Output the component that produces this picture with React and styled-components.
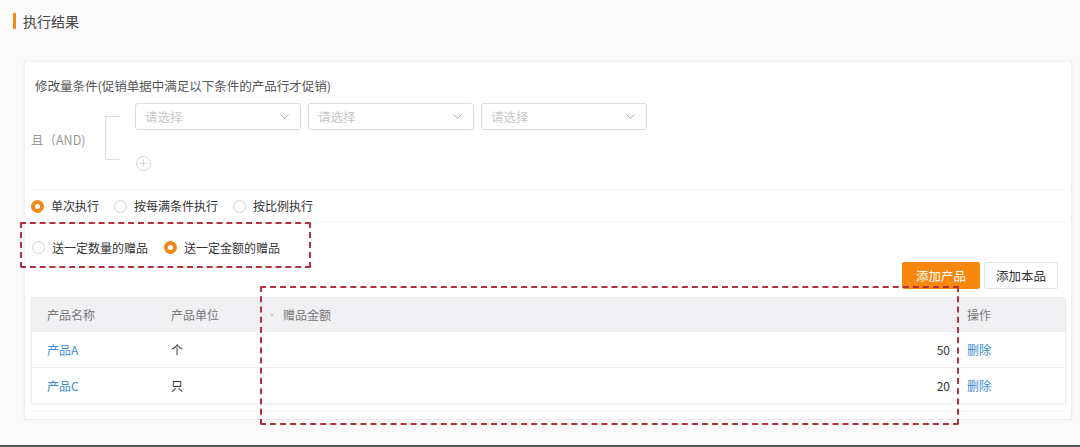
import React from "react";
import styled, { createGlobalStyle } from "styled-components";
import { ChevronDown, CirclePlus } from "lucide-react";

const Global = createGlobalStyle`
  html, body { margin: 0; padding: 0; }
  body {
    background: #fbfbfb;
    font-family: "Noto Sans CJK SC", "Noto Sans", sans-serif;
    color: #333;
  }
  * { box-sizing: border-box; }
`;

const Page = styled.div`
  position: relative;
  width: 1080px;
  height: 447px;
  padding-top: 13px;
  border-bottom: 2px solid #555;
  overflow: hidden;
`;

const Title = styled.div`
  margin-left: 13px;
  padding-left: 7px;
  border-left: 3px solid #f28a1c;
  height: 16px;
  line-height: 16px;
  font-size: 14px;
  color: #444;
`;

const Panel = styled.div`
  margin: 32px 0 0 24px;
  width: 1048px;
  background: #fff;
  border: 1px solid #efefef;
  box-shadow: 0 0 3px rgba(0, 0, 0, 0.04);
  padding: 15px 5px 7px 6px;
`;

const CondTitle = styled.div`
  padding-left: 4px;
  line-height: 18px;
  font-size: 12.5px;
  color: #555;
`;

const CondRow = styled.div`
  display: flex;
  align-items: flex-start;
  margin-top: 8px;
  padding-bottom: 18px;
`;

const AndLabel = styled.div`
  width: 74px;
  align-self: center;
  margin-top: 6px;
  font-size: 12.5px;
  color: #999;
  line-height: 16px;
`;

const Bracket = styled.div`
  width: 15px;
  height: 44px;
  margin-top: 13px;
  margin-right: 15px;
  border: 1px solid #ddd;
  border-right: none;
`;

const CondBody = styled.div`
  display: flex;
  flex-direction: column;
  gap: 25px;
`;

const SelectRow = styled.div`
  display: flex;
  gap: 7px;
`;

const Select = styled.div`
  width: 166px;
  height: 27px;
  border: 1px solid #dcdcdc;
  border-radius: 3px;
  background: #fff;
  display: flex;
  align-items: center;
  justify-content: space-between;
  padding: 0 8px 0 9px;
  font-size: 12.5px;
  color: #c8c8c8;
  svg { color: #999; }
`;

const AddBtn = styled.div`
  width: 17px;
  height: 16px;
  display: flex;
  align-items: center;
  color: #c4c4c4;
`;

const RadioRow = styled.div`
  position: relative;
  display: flex;
  align-items: center;
  border-top: 1px solid #efefef;
  height: ${(p) => p.$h}px;
  padding-top: ${(p) => p.$pt || 0}px;
  padding-left: ${(p) => p.$pl || 0}px;
`;

const RadioItem = styled.label`
  display: flex;
  align-items: center;
  gap: 7px;
  margin-right: ${(p) => p.$mr}px;
  font-size: 12px;
  line-height: 16px;
  color: #333;
`;

const Dot = styled.span`
  width: 13px;
  height: 13px;
  border-radius: 50%;
  background: #fff;
  border: ${(p) => (p.$on ? "4px solid #f0891a" : "1px solid #d4d4d4")};
`;

const Toolbar = styled.div`
  display: flex;
  justify-content: flex-end;
  gap: 4px;
  padding-right: 8px;
`;

const Button = styled.div`
  height: 27px;
  padding: 0 ${(p) => p.$px}px;
  display: flex;
  align-items: center;
  font-size: 12.5px;
  border-radius: 2px;
  background: ${(p) => (p.$primary ? "#f8870f" : "#fff")};
  color: ${(p) => (p.$primary ? "#fff" : "#333")};
  border: 1px solid ${(p) => (p.$primary ? "#f8870f" : "#e2e2e2")};
`;

const TableWrap = styled.div`
  margin-top: 8px;
  padding-bottom: 7px;
  border-bottom: 1px solid #f2f2f2;
`;

const Table = styled.div`
  border: 1px solid #eeeeee;
  border-top: none;
  box-shadow: 0 1px 2px rgba(0, 0, 0, 0.05);
`;

const Row = styled.div`
  display: grid;
  grid-template-columns: 124px 100px 1fr 108px;
  height: ${(p) => p.$h}px;
  align-items: center;
  background: ${(p) => (p.$head ? "#f0f0f3" : "#fff")};
  border-top: ${(p) => (p.$first || p.$head ? "none" : "1px solid #eeeeee")};
  font-size: 12px;
  color: ${(p) => (p.$head ? "#777" : "#333")};
`;

const Cell = styled.div`
  padding-left: ${(p) => p.$pl ?? 15}px;
  padding-right: ${(p) => p.$pr ?? 0}px;
  display: flex;
  align-items: center;
  justify-content: ${(p) => (p.$align === "right" ? "flex-end" : "flex-start")};
`;

const Req = styled.span`
  color: #bbb;
  margin-right: 6px;
  font-size: 10px;
`;

const Link = styled.span`
  color: #3a8bd6;
`;

const Annot = styled.div`
  position: absolute;
  border: 2px dashed #b3303e;
  border-radius: 2px;
  pointer-events: none;
  left: ${(p) => p.$x}px;
  top: ${(p) => p.$y}px;
  width: ${(p) => p.$w}px;
  height: ${(p) => p.$h}px;
`;

const rows = [
  { name: "产品A", unit: "个", amount: 50 },
  { name: "产品C", unit: "只", amount: 20 },
];

export default function App() {
  return (
    <>
      <Global />
      <Page>
        <Title>执行结果</Title>
        <Panel>
          <CondTitle>修改量条件(促销单据中满足以下条件的产品行才促销)</CondTitle>
          <CondRow>
            <AndLabel>且（AND)</AndLabel>
            <Bracket />
            <CondBody>
              <SelectRow>
                {[0, 1, 2].map((i) => (
                  <Select key={i}>
                    <span>请选择</span>
                    <ChevronDown size={15} strokeWidth={1.3} />
                  </Select>
                ))}
              </SelectRow>
              <AddBtn>
                <CirclePlus size={17} strokeWidth={1} />
              </AddBtn>
            </CondBody>
          </CondRow>
          <RadioRow $h={33}>
            <RadioItem $mr={15}>
              <Dot $on />
              单次执行
            </RadioItem>
            <RadioItem $mr={15}>
              <Dot />
              按每满条件执行
            </RadioItem>
            <RadioItem $mr={0}>
              <Dot />
              按比例执行
            </RadioItem>
          </RadioRow>
          <RadioRow $h={40} $pt={10} $pl={1}>
            <RadioItem $mr={16}>
              <Dot />
              送一定数量的赠品
            </RadioItem>
            <RadioItem $mr={0}>
              <Dot $on />
              送一定金额的赠品
            </RadioItem>
          </RadioRow>
          <Toolbar>
            <Button $primary $px={13}>添加产品</Button>
            <Button $px={11}>添加本品</Button>
          </Toolbar>
          <TableWrap>
            <Table>
              <Row $head $h={35}>
                <Cell>产品名称</Cell>
                <Cell>产品单位</Cell>
                <Cell $pl={11}>
                  <Req>•</Req>赠品金额
                </Cell>
                <Cell $pl={10}>操作</Cell>
              </Row>
              {rows.map((r, i) => (
                <Row key={r.name} $h={i === 0 ? 35 : 36} $first={i === 0}>
                  <Cell>
                    <Link>{r.name}</Link>
                  </Cell>
                  <Cell>{r.unit}</Cell>
                  <Cell $align="right" $pr={7}>{r.amount}</Cell>
                  <Cell $pl={10}>
                    <Link>删除</Link>
                  </Cell>
                </Row>
              ))}
            </Table>
          </TableWrap>
        </Panel>
        <Annot $x={20} $y={222} $w={291} $h={46} />
        <Annot $x={260} $y={286} $w={699} $h={139} />
      </Page>
    </>
  );
}
